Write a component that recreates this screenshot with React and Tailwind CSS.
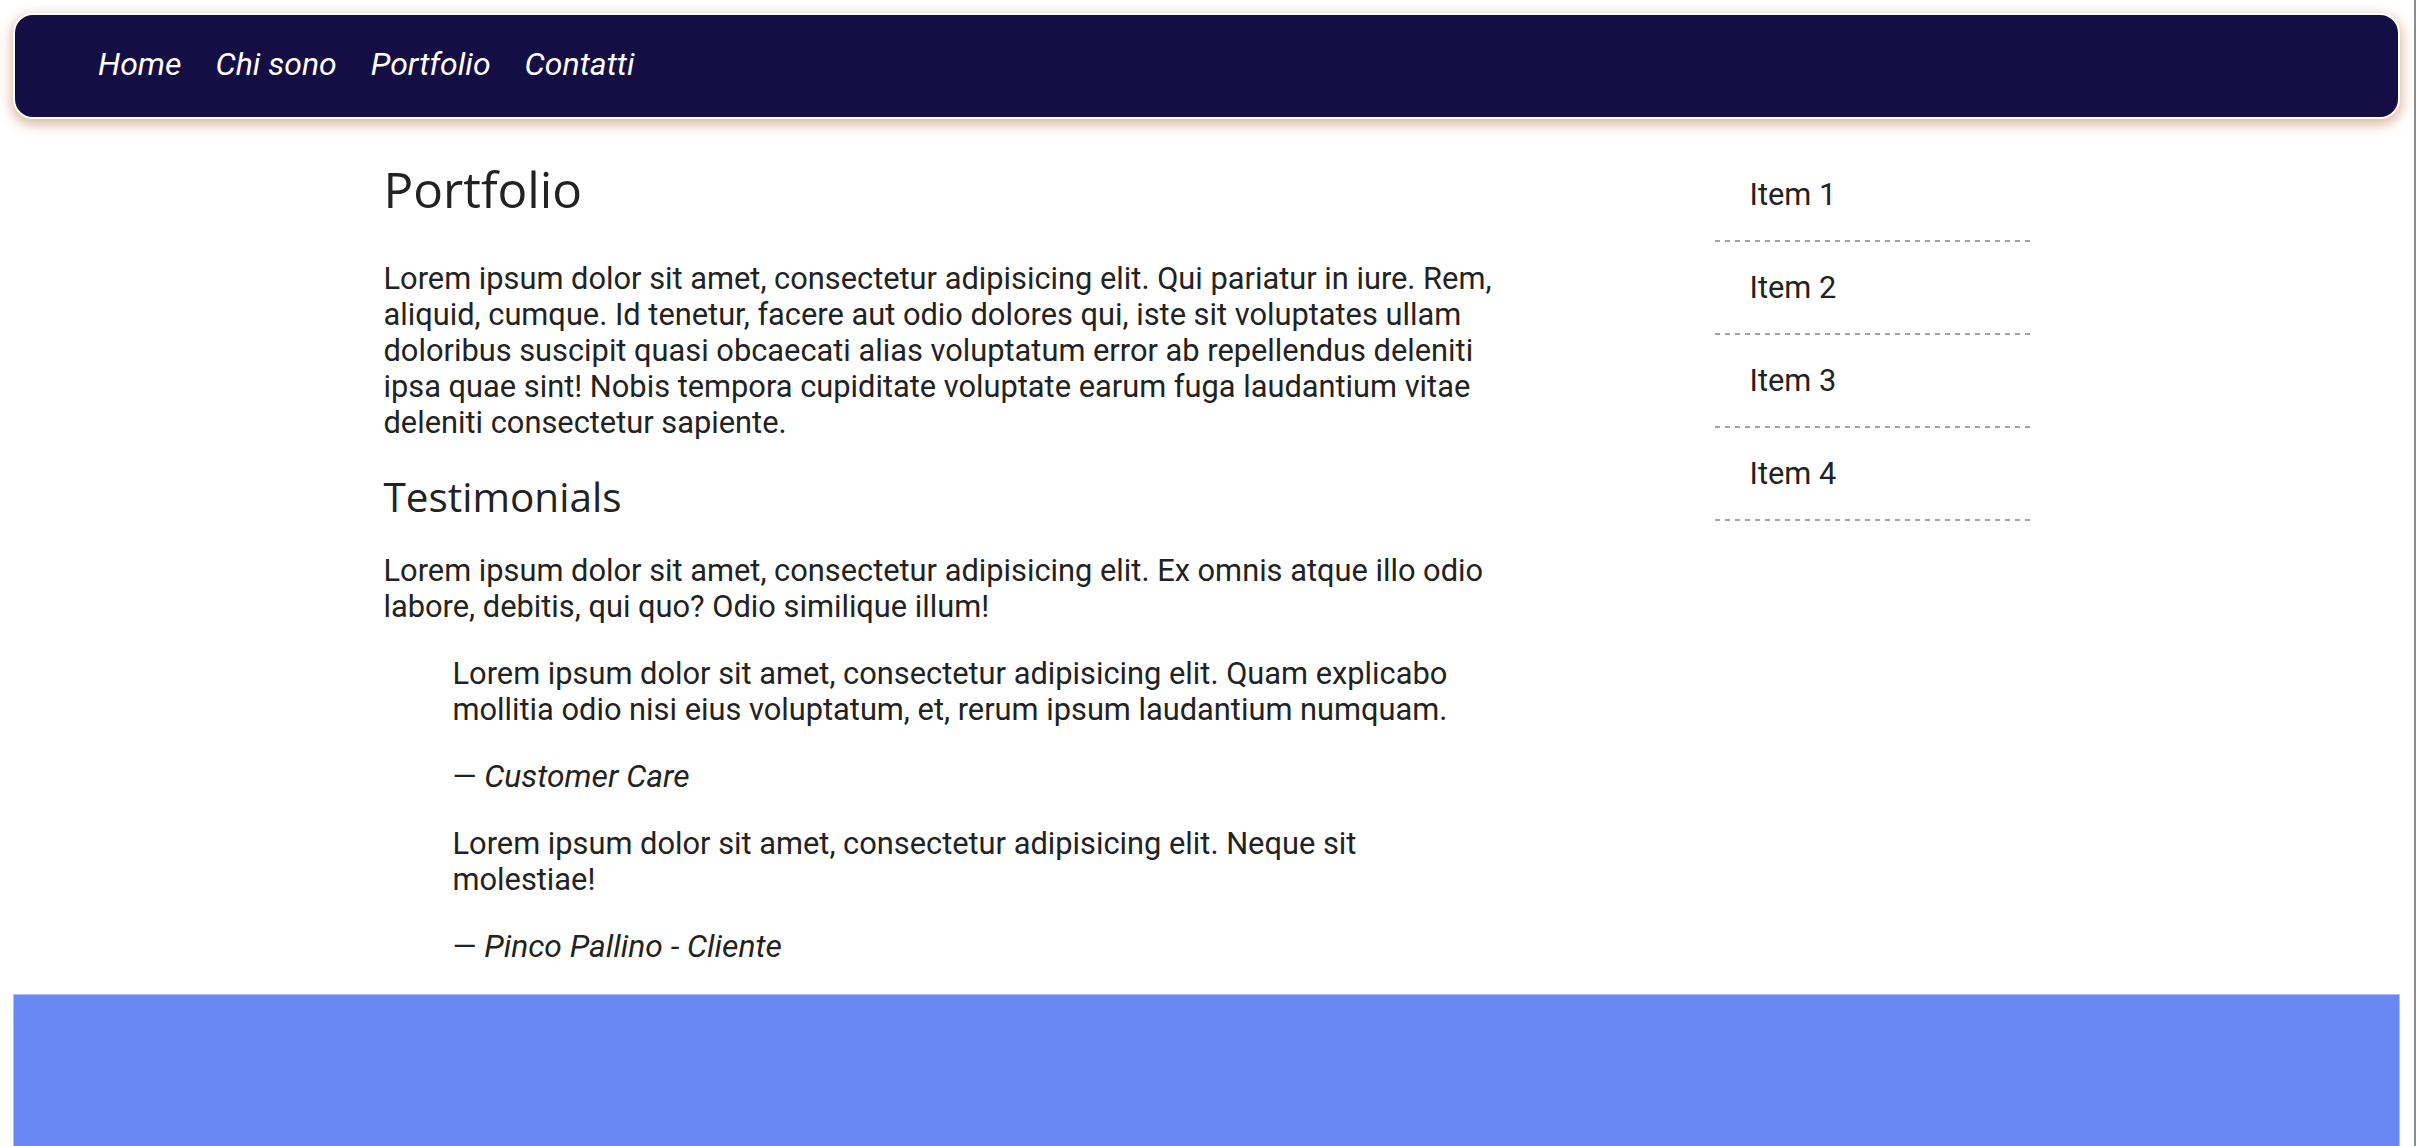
import React from 'react';

const navLinks = ['Home', 'Chi sono', 'Portfolio', 'Contatti'];
const sideItems = ['Item 1', 'Item 2', 'Item 3', 'Item 4'];

const App = () => {
  return (
    <div className="min-h-screen w-full bg-white border-r-2 border-[#8c8c8c] pl-[13px] pr-[14px] pt-[13px] text-[#222] font-['Roboto',sans-serif] overflow-hidden">
      {/* Top navigation */}
      <nav className="h-[106px] flex items-center gap-[34px] pl-[83px] pb-[5px] bg-[#150e45] border-2 border-white rounded-[20px] shadow-[0_4px_12px_2px_rgba(200,140,105,0.6)]">
        {navLinks.map((link) => (
          <a key={link} href="#" className="text-white italic text-[32px] leading-[36px]">
            {link}
          </a>
        ))}
      </nav>

      {/* Content */}
      <div className="mx-auto w-[1646px] flex items-start">
        <main className="w-[1144px] flex flex-col">
          <h1 className="mt-[37px] text-[49.5px] leading-[67px] font-normal font-['Open_Sans',sans-serif]">
            Portfolio
          </h1>
          <p className="mt-[38px] text-[30.8px] leading-[36px]">
            Lorem ipsum dolor sit amet, consectetur adipisicing elit. Qui pariatur in iure. Rem, aliquid, cumque. Id tenetur, facere aut odio dolores qui, iste sit voluptates ullam doloribus suscipit quasi obcaecati alias voluptatum error ab repellendus deleniti ipsa quae sint! Nobis tempora cupiditate voluptate earum fuga laudantium vitae deleniti consectetur sapiente.
          </p>
          <h2 className="mt-[29px] text-[40.5px] leading-[54px] font-normal font-['Open_Sans',sans-serif]">
            Testimonials
          </h2>
          <p className="mt-[29px] text-[30.8px] leading-[36px]">
            Lorem ipsum dolor sit amet, consectetur adipisicing elit. Ex omnis atque illo odio labore, debitis, qui quo? Odio similique illum!
          </p>
          <blockquote className="mt-[31px] mx-[69px] flex flex-col text-[30.8px] leading-[36px]">
            <p>
              Lorem ipsum dolor sit amet, consectetur adipisicing elit. Quam explicabo mollitia odio nisi eius voluptatum, et, rerum ipsum laudantium numquam.
            </p>
            <footer className="mt-[30px]">
              — <cite className="italic text-[31.8px]">Customer Care</cite>
            </footer>
            <p className="mt-[31px]">
              Lorem ipsum dolor sit amet, consectetur adipisicing elit. Neque sit molestiae!
            </p>
            <footer className="mt-[30px]">
              — <cite className="italic text-[31.8px]">Pinco Pallino - Cliente</cite>
            </footer>
          </blockquote>
        </main>

        {/* Sidebar */}
        <aside className="ml-auto w-[315px] mt-[30px]">
          <ul>
            {sideItems.map((item) => (
              <li key={item}>
                <div className="pl-[35px] pt-[28px] pb-[27px] text-[30.8px] leading-[36px]">{item}</div>
                <div className="h-[2px] bg-[repeating-linear-gradient(90deg,#a3a3a3_0px,#a3a3a3_5px,transparent_5px,transparent_10px)]" />
              </li>
            ))}
          </ul>
        </aside>
      </div>

      {/* Footer */}
      <footer className="mt-[29px] h-[220px] bg-[#6889f1] border-t border-x border-[#b3c0f6]" />
    </div>
  );
};

export default App;
